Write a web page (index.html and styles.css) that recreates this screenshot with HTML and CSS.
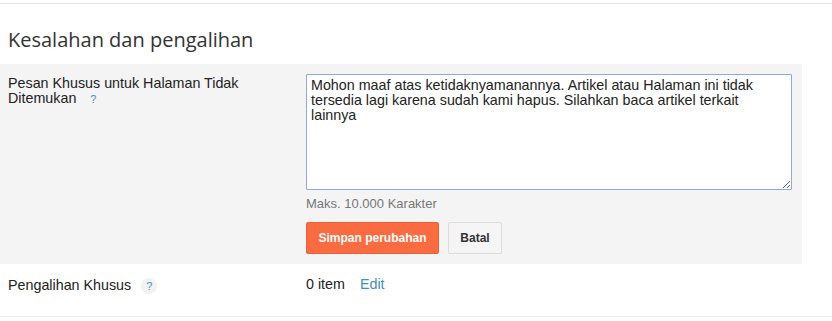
FILE: index.html
```html
<!DOCTYPE html>
<html lang="id">
<head>
    <meta charset="UTF-8">
    <meta name="viewport" content="width=device-width, initial-scale=1.0">
    <title>Kesalahan dan pengalihan</title>
    <link rel="stylesheet" href="styles.css">
</head>
<body>
    <div class="top-bar"></div>
    <h2 class="section-title">Kesalahan dan pengalihan</h2>

    <div class="setting-row editing">
        <div class="setting-label">
            Pesan Khusus untuk Halaman Tidak<br>Ditemukan <span class="help">?</span>
        </div>
        <div class="setting-value">
            <textarea class="message-box" spellcheck="true">Mohon maaf atas ketidaknyamanannya. Artikel atau Halaman ini tidak tersedia lagi karena sudah kami hapus. Silahkan baca artikel terkait lainnya</textarea>
            <div class="hint">Maks. 10.000 Karakter</div>
            <div class="actions">
                <button class="btn btn-save">Simpan perubahan</button>
                <button class="btn btn-cancel">Batal</button>
            </div>
        </div>
    </div>

    <div class="setting-row plain">
        <div class="setting-label">
            Pengalihan Khusus <span class="help help-badge">?</span>
        </div>
        <div class="setting-value inline">
            <span>0 item</span>
            <a href="#" class="edit-link">Edit</a>
        </div>
    </div>
    <div class="bottom-line"></div>
</body>
</html>
```

FILE: styles.css
```css
body {
    margin: 0;
    font-family: Arial, "Liberation Sans", sans-serif;
    color: #222;
    background: #fff;
}
.top-bar {
    height: 3px;
    border-bottom: 1px solid #e6e6e6;
}
.section-title {
    margin: 0;
    padding: 22px 8px 0 8px;
    height: 38px;
    font-family: "Open Sans", sans-serif;
    font-weight: 400;
    font-size: 20px;
    color: #333;
}
.setting-row {
    display: grid;
    grid-template-columns: 298px 1fr;
    width: 802px;
    padding: 0 8px;
    box-sizing: border-box;
    font-size: 14.3px;
}
.setting-row.editing {
    background: #f4f4f4;
    padding-top: 10px;
    height: 200px;
}
.setting-label {
    padding-top: 2px;
    line-height: 15px;
}
.help {
    color: #3f95c0;
    font-size: 11px;
    margin-left: 10px;
}
.help-badge {
    display: inline-block;
    width: 16px;
    height: 16px;
    line-height: 16px;
    text-align: center;
    border-radius: 50%;
    background: #f2f2f2;
    margin-left: 6px;
}
.message-box {
    display: block;
    width: 486px;
    height: 116px;
    box-sizing: border-box;
    margin: 0;
    padding: 3px 10px 3px 4px;
    border: 1px solid #8fa8e8;
    border-radius: 1px;
    font-family: Arial, "Liberation Sans", sans-serif;
    font-size: 14.3px;
    line-height: 15px;
    color: #222;
    resize: both;
    outline: none;
}
.hint {
    margin-top: 6px;
    font-size: 13px;
    color: #777;
}
.actions {
    display: flex;
    gap: 9px;
    margin-top: 11px;
}
.btn {
    height: 32px;
    padding: 0;
    white-space: nowrap;
    font-family: Arial, "Liberation Sans", sans-serif;
    font-size: 12px;
    font-weight: bold;
    border-radius: 2px;
    cursor: pointer;
}
.btn-save {
    width: 133px;
    background: #fa6b3f;
    border: 1px solid #ee6236;
    color: #fff;
}
.btn-cancel {
    width: 54px;
    background: #f5f5f5;
    border: 1px solid #dcdcdc;
    color: #333;
}
.setting-row.plain {
    height: 52px;
    padding-top: 12px;
}
.setting-value.inline {
    display: flex;
    gap: 15px;
    line-height: 16px;
}
.edit-link {
    color: #3f8fbf;
    text-decoration: none;
}
.bottom-line {
    border-top: 1px solid #ececec;
}
```
